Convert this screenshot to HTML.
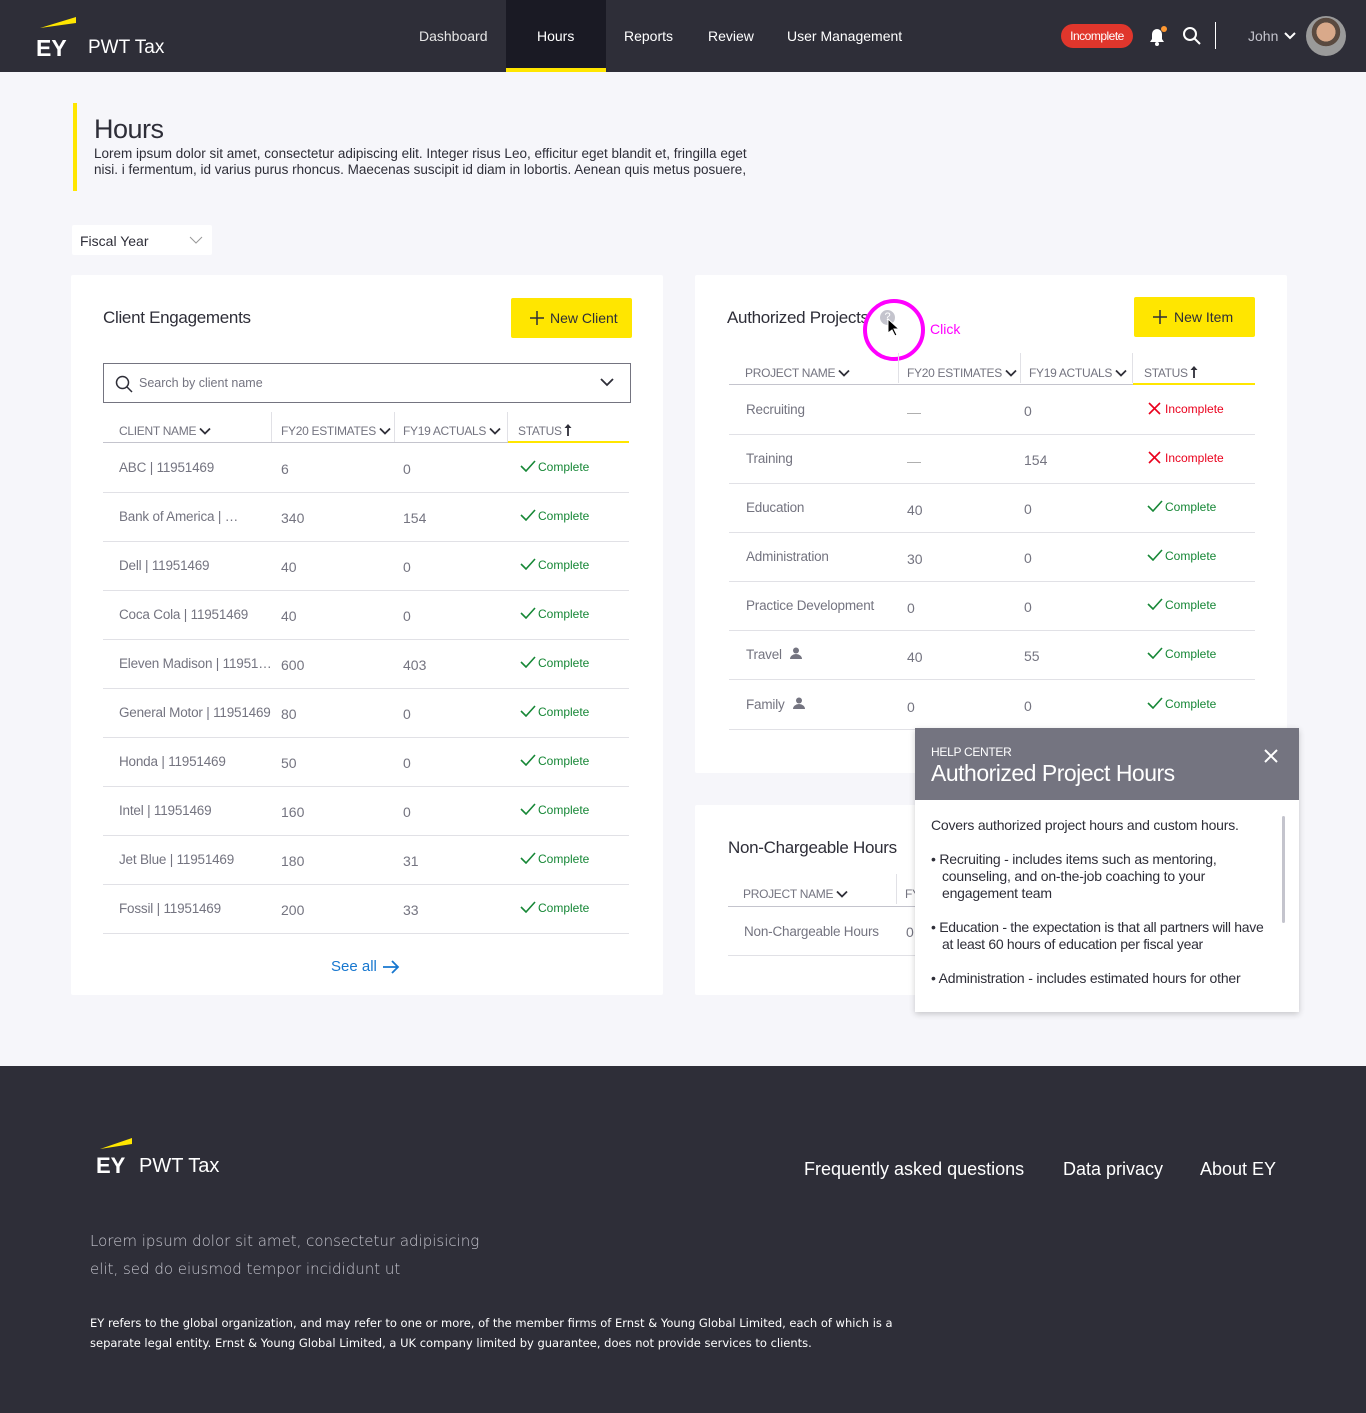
<!DOCTYPE html>
<html><head><meta charset="utf-8"><style>
*{margin:0;padding:0;box-sizing:border-box}
body{width:1366px;height:1413px;background:#f6f6fa;font-family:"Liberation Sans",sans-serif;position:relative;overflow:hidden;color:#2e2e38}
.a{position:absolute;white-space:nowrap}
.nav{left:0;top:0;width:1366px;height:72px;background:#2e2e38}
.nl{color:#fff;font-size:14px;top:28px}
.card{background:#fff;border-radius:2px}
.th{font-size:12px;color:#747480;letter-spacing:-0.3px}
.td{font-size:14px;color:#747480}
.line{height:1px;background:#e1e1e6}
.ok{font-size:12px;color:#168736}
.bad{font-size:12px;color:#ea011d}
.ft{color:#fff}
</style></head><body>
<div class="a nav"></div>
<svg class="a" style="left:36px;top:15px" width="42" height="42"><polygon points="4,13 40,2 40,8" fill="#ffe600"/><text x="0" y="41" fill="#fff" font-family="Liberation Sans" font-weight="bold" font-size="23">EY</text></svg>
<div class="a" style="left:88px;top:37px;color:#fff;font-size:19px">PWT Tax</div>
<div class="a" style="left:506px;top:0;width:100px;height:72px;background:#1a1a24;border-bottom:4px solid #ffe600"></div>
<div class="a nl" style="left:419px;color:#e6e6e6">Dashboard</div>
<div class="a nl" style="left:537px">Hours</div>
<div class="a nl" style="left:624px">Reports</div>
<div class="a nl" style="left:708px">Review</div>
<div class="a nl" style="left:787px">User Management</div>
<div class="a" style="left:1061px;top:24px;width:72px;height:24px;border-radius:12px;background:#e0362c;color:#fff;font-size:12px;text-align:center;line-height:24px;letter-spacing:-0.5px">Incomplete</div>
<svg class="a" style="left:1147px;top:25px" width="22" height="22"><path d="M3 17h14l-2-3V9a5 5 0 0 0-10 0v5z" fill="#fff"/><circle cx="10" cy="19" r="2" fill="#fff"/><circle cx="17" cy="4" r="3" fill="#ff9831"/></svg>
<svg class="a" style="left:1182px;top:26px" width="20" height="20"><circle cx="8" cy="8" r="6" stroke="#fff" stroke-width="2" fill="none"/><path d="M12.5 12.5L18 18" stroke="#fff" stroke-width="2"/></svg>
<div class="a" style="left:1215px;top:22px;width:1px;height:27px;background:#fff"></div>
<div class="a" style="left:1248px;top:28px;color:#c4c4cd;font-size:14px">John</div>
<svg class="a" style="left:1283px;top:31px" width="14" height="10"><path d="M2 2l5 5 5-5" stroke="#fff" stroke-width="2" fill="none"/></svg>
<div class="a" style="left:1306px;top:16px;width:40px;height:40px;border-radius:50%;background:radial-gradient(circle at 50% 40%,#d9a98a 0 30%,#5a4a40 31% 45%,#9a9a9a 46%)"></div>

<div class="a" style="left:73px;top:103px;width:4px;height:88px;background:#ffe600"></div>
<div class="a" style="left:94px;top:114px;font-size:27px;letter-spacing:-0.5px">Hours</div>
<div class="a" style="left:94px;top:146px;font-size:13.5px;line-height:16px;white-space:normal;width:680px">Lorem ipsum dolor sit amet, consectetur adipiscing elit. Integer risus Leo, efficitur eget blandit et, fringilla eget nisi. i fermentum, id varius purus rhoncus. Maecenas suscipit id diam in lobortis. Aenean quis metus posuere,</div>
<div class="a" style="left:72px;top:225px;width:140px;height:30px;background:#fff;border-radius:2px"></div>
<div class="a" style="left:80px;top:233px;font-size:14px;color:#2e2e38">Fiscal Year</div>
<svg class="a" style="left:189px;top:235px" width="14" height="10"><path d="M1 2l6 6 6-6" stroke="#999" fill="none"/></svg>

<!-- left card -->
<div class="a card" style="left:71px;top:275px;width:592px;height:720px"></div>
<div class="a" style="left:103px;top:308px;font-size:17px;letter-spacing:-0.3px">Client Engagements</div>
<div class="a" style="left:511px;top:298px;width:121px;height:40px;background:#ffe600;border-radius:2px;font-size:14px;line-height:40px;padding-left:39px">New Client</div>
<svg class="a" style="left:530px;top:311px" width="14" height="14"><path d="M7 0v14M0 7h14" stroke="#2e2e38" stroke-width="1.5"/></svg>
<div class="a" style="left:103px;top:363px;width:528px;height:40px;border:1px solid #747480"></div>
<svg class="a" style="left:115px;top:375px" width="18" height="18"><circle cx="7.5" cy="7.5" r="6" stroke="#2e2e38" stroke-width="1.5" fill="none"/><path d="M12 12l5 5" stroke="#2e2e38" stroke-width="1.5"/></svg>
<div class="a" style="left:139px;top:376px;font-size:12.5px;color:#747480">Search by client name</div>
<svg class="a" style="left:600px;top:377px" width="14" height="10"><path d="M1 2l6 6 6-6" stroke="#2e2e38" stroke-width="1.8" fill="none"/></svg>
<div class="a th" style="left:119px;top:424px">CLIENT NAME <i class="cv"></i></div>
<div class="a th" style="left:281px;top:424px">FY20 ESTIMATES <i class="cv"></i></div>
<div class="a th" style="left:403px;top:424px">FY19 ACTUALS <i class="cv"></i></div>
<div class="a th" style="left:518px;top:424px">STATUS<i class="up"></i></div>
<div class="a" style="left:271px;top:412px;width:1px;height:30px;background:#e1e1e6"></div>
<div class="a" style="left:394px;top:412px;width:1px;height:30px;background:#e1e1e6"></div>
<div class="a" style="left:507px;top:412px;width:1px;height:30px;background:#e1e1e6"></div>
<div class="a line" style="left:103px;top:442px;width:526px;background:#c4c4cd"></div>
<div class="a" style="left:508px;top:441px;width:121px;height:2px;background:#ffe600"></div>
<div id="lrows"></div>
<div class="a" style="left:331px;top:958px;font-size:15px;color:#1777cf">See all</div>
<svg class="a" style="left:382px;top:958px" width="18" height="18"><path d="M1 9h15M10 3l6 6-6 6" stroke="#1777cf" stroke-width="1.8" fill="none"/></svg>

<!-- right card 1 -->
<div class="a card" style="left:695px;top:275px;width:592px;height:498px"></div>
<div class="a" style="left:727px;top:308px;font-size:17px;letter-spacing:-0.3px">Authorized Projects</div>
<div class="a" style="left:880px;top:310px;width:15px;height:15px;border-radius:50%;background:#c4c4cd;color:#fff;font-size:11px;text-align:center;line-height:15px">?</div>
<div class="a" style="left:863px;top:299px;width:62px;height:62px;border:4px solid #ff00ff;border-radius:50%"></div>
<svg class="a" style="left:887px;top:318px" width="14" height="20"><path d="M1 1v14l4-3 3 6 2-1-3-6h5z" fill="#000" stroke="#fff"/></svg>
<div class="a" style="left:930px;top:321px;font-size:14px;color:#ff00ff">Click</div>
<div class="a" style="left:1134px;top:297px;width:121px;height:40px;background:#ffe600;border-radius:2px;font-size:14px;line-height:40px;padding-left:40px">New Item</div>
<svg class="a" style="left:1153px;top:310px" width="14" height="14"><path d="M7 0v14M0 7h14" stroke="#2e2e38" stroke-width="1.5"/></svg>
<div class="a th" style="left:745px;top:366px">PROJECT NAME <i class="cv"></i></div>
<div class="a th" style="left:907px;top:366px">FY20 ESTIMATES <i class="cv"></i></div>
<div class="a th" style="left:1029px;top:366px">FY19 ACTUALS <i class="cv"></i></div>
<div class="a th" style="left:1144px;top:366px">STATUS<i class="up"></i></div>
<div class="a" style="left:898px;top:353px;width:1px;height:30px;background:#e1e1e6"></div>
<div class="a" style="left:1020px;top:353px;width:1px;height:30px;background:#e1e1e6"></div>
<div class="a" style="left:1132px;top:353px;width:1px;height:30px;background:#e1e1e6"></div>
<div class="a line" style="left:729px;top:384px;width:526px;background:#c4c4cd"></div>
<div class="a" style="left:1133px;top:383px;width:122px;height:2px;background:#ffe600"></div>
<div id="rrows"></div>

<!-- right card 2 -->
<div class="a card" style="left:695px;top:805px;width:592px;height:190px"></div>
<div class="a" style="left:728px;top:838px;font-size:17px;letter-spacing:-0.3px">Non-Chargeable Hours</div>
<div class="a th" style="left:743px;top:887px">PROJECT NAME <i class="cv"></i></div>
<div class="a th" style="left:905px;top:887px">FY</div>
<div class="a" style="left:896px;top:874px;width:1px;height:30px;background:#e1e1e6"></div>
<div class="a line" style="left:728px;top:906px;width:200px;background:#c4c4cd"></div>
<div class="a td" style="left:744px;top:924px;font-size:13.5px;letter-spacing:-0.2px">Non-Chargeable Hours</div>
<div class="a td" style="left:906px;top:924px">0</div>
<div class="a line" style="left:728px;top:955px;width:200px"></div>

<!-- help panel -->
<div class="a" style="left:915px;top:728px;width:384px;height:284px;background:#fff;box-shadow:0 2px 6px rgba(0,0,0,.2)"></div>
<div class="a" style="left:915px;top:728px;width:384px;height:72px;background:#747480"></div>
<div class="a" style="left:931px;top:745px;font-size:12px;color:#fff;letter-spacing:-0.3px">HELP CENTER</div>
<div class="a" style="left:931px;top:760px;font-size:23px;color:#fff;letter-spacing:-0.5px">Authorized Project Hours</div>
<svg class="a" style="left:1263px;top:748px" width="16" height="16"><path d="M2 2l12 12M14 2L2 14" stroke="#fff" stroke-width="2"/></svg>
<div class="a" style="left:1282px;top:816px;width:3px;height:107px;background:#c4c4cd;border-radius:2px"></div>
<div class="a" style="left:931px;top:817px;font-size:14px;color:#2e2e38;letter-spacing:-0.2px">Covers authorized project hours and custom hours.</div>
<div class="a" style="left:931px;top:851px;font-size:14px;line-height:17px;letter-spacing:-0.2px">• Recruiting - includes items such as mentoring,<br><span style="padding-left:11px">counseling, and on-the-job coaching to your</span><br><span style="padding-left:11px">engagement team</span></div>
<div class="a" style="left:931px;top:919px;font-size:14px;line-height:17px;letter-spacing:-0.3px">• Education - the expectation is that all partners will have<br><span style="padding-left:11px">at least 60 hours of education per fiscal year</span></div>
<div class="a" style="left:931px;top:970px;font-size:14px;letter-spacing:-0.2px">• Administration - includes estimated hours for other</div>

<!-- footer -->
<div class="a" style="left:0;top:1066px;width:1366px;height:347px;background:#2e2e38"></div>
<svg class="a" style="left:96px;top:1137px" width="40" height="40"><polygon points="4,12 36,1 36,7" fill="#ffe600"/><text x="0" y="36" fill="#fff" font-family="Liberation Sans" font-weight="bold" font-size="22">EY</text></svg>
<div class="a ft" style="left:139px;top:1155px;font-size:20px">PWT Tax</div>
<div class="a ft" style="left:804px;top:1159px;font-size:18px">Frequently asked questions</div>
<div class="a ft" style="left:1063px;top:1159px;font-size:18px">Data privacy</div>
<div class="a ft" style="left:1200px;top:1159px;font-size:18px">About EY</div>
<div class="a" style="left:90px;top:1227px;font-size:15px;line-height:28px;color:#c4c4cd;font-family:'DejaVu Sans',sans-serif;font-weight:300">Lorem ipsum dolor sit amet, consectetur adipisicing<br>elit, sed do eiusmod tempor incididunt ut</div>
<div class="a" style="left:90px;top:1313px;font-size:11.5px;line-height:20px;color:#fff;font-family:'DejaVu Sans',sans-serif">EY refers to the global organization, and may refer to one or more, of the member firms of Ernst &amp; Young Global Limited, each of which is a<br>separate legal entity. Ernst &amp; Young Global Limited, a UK company limited by guarantee, does not provide services to clients.</div>

<script>
document.querySelectorAll('i.cv').forEach(e=>e.outerHTML='<svg width="12" height="9" style="vertical-align:-1px"><path d="M1 1.5l5 5 5-5" stroke="#2e2e38" stroke-width="1.8" fill="none"/></svg>');
document.querySelectorAll('i.up').forEach(e=>e.outerHTML='<svg width="8" height="12" style="vertical-align:-1px;margin-left:2px"><path d="M4 12V3" stroke="#2e2e38" stroke-width="1.8"/><path d="M0.5 4L4 0 7.5 4z" fill="#2e2e38"/></svg>');
const chk='<svg width="16" height="12" style="vertical-align:-1px;margin-right:2px"><path d="M1 6l5 5 9-10" stroke="#168736" stroke-width="1.6" fill="none"/></svg>';
const xx='<svg width="13" height="13" style="vertical-align:-2px;margin-right:4px"><path d="M1 1l11 11M12 1L1 12" stroke="#ea011d" stroke-width="1.6"/></svg>';
let L=[["ABC | 11951469",6,0],["Bank of America | …",340,154],["Dell | 11951469",40,0],["Coca Cola | 11951469",40,0],["Eleven Madison | 11951…",600,403],["General Motor | 11951469",80,0],["Honda | 11951469",50,0],["Intel | 11951469",160,0],["Jet Blue | 11951469",180,31],["Fossil | 11951469",200,33]];
let h='';
L.forEach((r,i)=>{let y=468+49*i;
h+=`<div class="a td" style="left:119px;top:${y-8}px;font-size:13.5px;letter-spacing:-0.2px">${r[0]}</div><div class="a td" style="left:281px;top:${y-7}px">${r[1]}</div><div class="a td" style="left:403px;top:${y-7}px">${r[2]}</div><div class="a ok" style="left:520px;top:${y-8}px">${chk}Complete</div><div class="a line" style="left:103px;top:${y+24}px;width:526px"></div>`;});
document.getElementById('lrows').outerHTML=h;
let R=[["Recruiting","—",0,0],["Training","—",154,0],["Education",40,0,1],["Administration",30,0,1],["Practice Development",0,0,1],["Travel",40,55,1,1],["Family",0,0,1,1]];
const person='<svg width="12" height="12" style="margin-left:8px;vertical-align:0"><circle cx="6" cy="3.5" r="3" fill="#747480"/><path d="M0 12a6 5 0 0 1 12 0z" fill="#747480"/></svg>';
h='';
R.forEach((r,i)=>{let y=410+49*i+(i==6?1:0);
h+=`<div class="a td" style="left:746px;top:${y-8}px;font-size:13.5px;letter-spacing:-0.2px">${r[0]}${r[4]?person:''}</div><div class="a td" style="left:907px;top:${y-6}px;${r[1]=='—'?'color:#aaa':''}">${r[1]}</div><div class="a td" style="left:1024px;top:${y-7}px">${r[2]}</div>${r[3]?`<div class="a ok" style="left:1147px;top:${y-8}px">${chk}Complete</div>`:`<div class="a bad" style="left:1148px;top:${y-8}px">${xx}Incomplete</div>`}<div class="a line" style="left:729px;top:${y+24}px;width:526px"></div>`;});
document.getElementById('rrows').outerHTML=h;
</script>
</body></html>
